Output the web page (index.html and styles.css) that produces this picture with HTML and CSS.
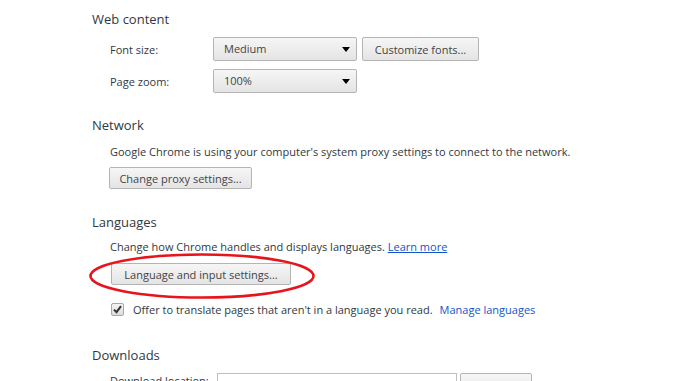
FILE: index.html
```html
<!DOCTYPE html>
<html lang="en">
<head>
    <meta charset="UTF-8">
    <title>Settings</title>
    <link rel="stylesheet" href="styles.css">
</head>
<body>
    <div class="settings">
        <section class="section web-content">
            <h3>Web content</h3>
            <div class="row">
                <span class="label">Font size:</span>
                <div class="select select-size">Medium <span class="arrow"></span></div>
                <button class="btn btn-fonts">Customize fonts...</button>
            </div>
            <div class="row">
                <span class="label">Page zoom:</span>
                <div class="select select-zoom">100% <span class="arrow"></span></div>
            </div>
        </section>

        <section class="section network">
            <h3>Network</h3>
            <div class="content">
                <p>Google Chrome is using your computer's system proxy settings to connect to the network.</p>
                <button class="btn btn-proxy">Change proxy settings...</button>
            </div>
        </section>

        <section class="section languages">
            <h3>Languages</h3>
            <div class="content">
                <p>Change how Chrome handles and displays languages. <a href="#" class="link">Learn more</a></p>
                <div class="lang-btn-wrap">
                    <button class="btn btn-lang">Language and input settings...</button>
                    <svg class="highlight" width="228" height="48" viewBox="0 0 228 48">
                        <ellipse cx="114" cy="24" rx="111.5" ry="21.5" fill="none" stroke="#e8141c" stroke-width="2.6"/>
                    </svg>
                </div>
                <label class="check-row">
                    <span class="checkbox">
                        <svg width="11" height="11" viewBox="0 0 11 11">
                            <path d="M2 5.6 L4.5 8.2 L9 2.2" fill="none" stroke="#333" stroke-width="2"/>
                        </svg>
                    </span>
                    <span>Offer to translate pages that aren't in a language you read.</span>
                    <a href="#" class="link plain">Manage languages</a>
                </label>
            </div>
        </section>

        <section class="section downloads">
            <h3>Downloads</h3>
            <div class="row">
                <span class="label">Download location:</span>
                <div class="textbox">C:\Users\user\Downloads</div>
                <button class="btn btn-change">Change...</button>
            </div>
        </section>
    </div>
</body>
</html>
```

FILE: styles.css
```css
* {
    margin: 0;
    padding: 0;
    box-sizing: border-box;
}

body {
    font-family: 'Open Sans', sans-serif;
    font-size: 11px;
    color: #303942;
    background-color: #fff;
    overflow: hidden;
}

.settings {
    padding: 10px 0 0 92px;
}

.section h3 {
    font-size: 13px;
    font-weight: 400;
    line-height: 18px;
    color: #303942;
}

.network {
    margin-top: 23px;
}

.languages {
    margin-top: 24px;
}

.downloads {
    margin-top: 28px;
}

.row {
    display: flex;
    align-items: center;
    padding-left: 18px;
    height: 24px;
    margin-top: 9px;
}

.row + .row {
    margin-top: 8px;
}

.label {
    width: 103px;
    white-space: nowrap;
}

.select {
    position: relative;
    height: 24px;
    width: 144px;
    line-height: 22px;
    padding-left: 10px;
    border: 1px solid #b4b4b4;
    border-radius: 2px;
    background: linear-gradient(#f6f6f6, #e4e4e4);
    color: #444;
}

.select .arrow {
    position: absolute;
    right: 6px;
    top: 9px;
    border-left: 4px solid transparent;
    border-right: 4px solid transparent;
    border-top: 5px solid #000;
}

.btn {
    display: block;
    font-family: inherit;
    font-size: 11px;
    color: #444;
    height: 24px;
    padding: 0 8px;
    white-space: nowrap;
    border: 1px solid #b4b4b4;
    border-radius: 2px;
    background: linear-gradient(#f6f6f6, #e4e4e4);
}

.btn-fonts {
    margin-left: 5px;
    width: 117px;
}

.content {
    padding-left: 18px;
}

.content p {
    line-height: 18px;
    white-space: nowrap;
}

.network .content p {
    margin-top: 9px;
}

.btn-proxy {
    margin-top: 6px;
    margin-left: -1px;
    width: 143px;
    height: 22px;
}

.languages .content p {
    margin-top: 7px;
}

.link {
    color: #15c;
}

.link.plain {
    text-decoration: none;
    margin-left: 7px;
}

.lang-btn-wrap {
    position: relative;
    margin-top: 7px;
    height: 22px;
}

.btn-lang {
    margin-left: 1px;
    width: 180px;
    height: 22px;
}

.highlight {
    position: absolute;
    left: -22px;
    top: -11px;
}

.check-row {
    display: flex;
    align-items: center;
    margin-top: 15px;
    height: 18px;
    white-space: nowrap;
}

.checkbox {
    width: 13px;
    height: 13px;
    margin: 0 9px 0 1px;
    border: 1px solid #a8a8a8;
    border-radius: 2px;
    background: linear-gradient(#f4f4f4, #dcdcdc);
    display: flex;
}

.downloads .row {
    align-items: flex-start;
}

.textbox {
    width: 240px;
    height: 24px;
    padding-left: 6px;
    line-height: 22px;
    margin-left: 4px;
    border: 1px solid #bfbfbf;
    color: #444;
}

.btn-change {
    margin-left: 3px;
    width: 72px;
}
```
